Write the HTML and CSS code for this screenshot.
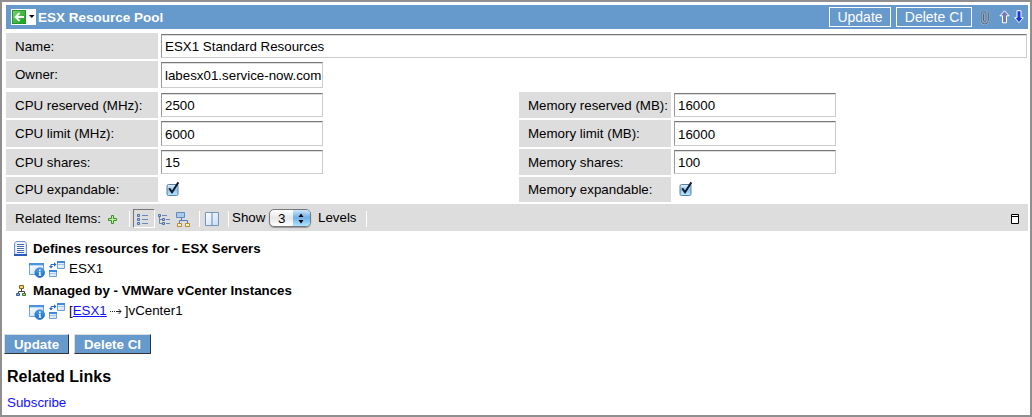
FILE: index.html
```html
<!DOCTYPE html>
<html lang="en">
<head>
<meta charset="utf-8">
<title>ESX Resource Pool</title>
<link rel="stylesheet" href="styles.css">
</head>
<body>
<svg class="defs" width="0" height="0" aria-hidden="true">
  <defs>
    <linearGradient id="green" x1="0" y1="0" x2="1" y2="1"><stop offset="0" stop-color="#7bd36a"/><stop offset="1" stop-color="#109c20"/></linearGradient>
    <linearGradient id="aqua" x1="0" y1="0" x2="0" y2="1"><stop offset="0" stop-color="#e4f2fc"/><stop offset=".5" stop-color="#8fc3ee"/><stop offset="1" stop-color="#b9edff"/></linearGradient>
    <linearGradient id="pane" x1="0" y1="0" x2="1" y2="1"><stop offset="0" stop-color="#fff"/><stop offset="1" stop-color="#c4dcf6"/></linearGradient>
    <linearGradient id="info" x1="0" y1="0" x2="0" y2="1"><stop offset="0" stop-color="#55a5ea"/><stop offset="1" stop-color="#1264c4"/></linearGradient>
    <symbol id="check" viewBox="0 0 14 15">
      <rect x="1" y="3.500" width="11" height="11" rx="1.5" fill="url(#aqua)" stroke="#5d7f9e"/>
      <path d="M3.2 7.2 6 11.3 12.4 1.4" fill="none" stroke="#101c30" stroke-width="2"/>
    </symbol>
    <symbol id="record" viewBox="0 0 16 16">
      <path d="M.5 1.5h14v11H.5z" fill="url(#pane)" stroke="#6aa5e3"/><path d="M0 1h15v3H0z" fill="#4b93df"/><path d="M1 3.5h13" stroke="#b9daf8"/>
      <circle cx="10.7" cy="10.7" r="4.8" fill="url(#info)" stroke="#2872c0" stroke-width=".8"/>
      <path d="M10 7.4h1.6v1.5H10zM9.7 9.7h1.9v3h.7v1H9.6v-1h.6v-2h-.5z" fill="#fff"/>
    </symbol>
    <symbol id="relation" viewBox="0 0 17 17">
      <path d="M8.5.5h7v7h-7zM.5 9.5h7v6h-7z" fill="url(#pane)" stroke="#6d9fd9"/>
      <path d="M8 0h8v2H8zM0 9h8v2H0z" fill="#4388d7"/><path d="M9 3.5h6M1 12.5h6" stroke="#a5c7ef"/>
      <path d="M2 6V3.500H6" fill="none" stroke="#2463d0"/><path d="M5 1.300 7.500 3.500 5 5.700zM0 5h4L2 7.500z" fill="#2463d0"/>
    </symbol>
  </defs>
</svg>
<main class="window">
  <header class="titlebar">
    <div class="back">
      <svg width="24" height="16" viewBox="0 0 24 16"><rect x=".5" y=".5" width="13" height="13" fill="url(#green)" stroke="#259a2b"/><path d="M12 7H4M7.5 3l-4 4 4 4" fill="none" stroke="#fff" stroke-width="1.800"/><path d="M17 5h5.500L19.750 8z"/></svg>
    </div>
    <h1 class="title">ESX Resource Pool</h1>
    <button class="top-button top-update">Update</button>
    <button class="top-button top-delete">Delete CI</button>
    <svg class="clip" width="10" height="15" viewBox="0 0 10 15"><path d="M3.500 4v6q0 1.500 1.300 1.500T6 10V3Q6 .9 3.600.9T1.200 3v7.500q0 3.400 3.600 3.400t3.600-3.400V2.500" fill="none" stroke="#a9bccd" stroke-width="1.800"/><path d="M3.500 4v6q0 1.500 1.300 1.500T6 10V3Q6 .9 3.600.9T1.200 3v7.500q0 3.400 3.600 3.400t3.600-3.400V2.500" fill="none" stroke="#4d5f72" stroke-width=".9"/></svg>
    <svg class="arrow-up" width="11" height="14" viewBox="0 0 11 14"><path d="m5.5.8 4.600 5H7.5v7h-4v-7H.9z" fill="#7777b8" stroke="#fff"/></svg>
    <svg class="arrow-down" width="10" height="14" viewBox="0 0 10 14"><path d="m5 12.700 4.300-5H7v-7H3v7H.7z" fill="#1838e0" stroke="#fff"/></svg>
  </header>

  <form class="form">
    <label class="label">Name:</label><div class="field field-wide">ESX1 Standard Resources</div>
    <label class="label">Owner:</label><div class="field owner">labesx01.service-now.com</div>
  </form>
  <div class="columns">
    <div class="form specs">
      <label class="label">CPU reserved (MHz):</label><div class="field">2500</div>
      <label class="label">CPU limit (MHz):</label><div class="field tall">6000</div>
      <label class="label">CPU shares:</label><div class="field">15</div>
      <label class="label">CPU expandable:</label><svg class="check" width="14" height="15"><use href="#check"/></svg>
    </div>
    <div class="form specs">
      <label class="label">Memory reserved (MB):</label><div class="field">16000</div>
      <label class="label">Memory limit (MB):</label><div class="field tall">16000</div>
      <label class="label">Memory shares:</label><div class="field">100</div>
      <label class="label">Memory expandable:</label><svg class="check" width="14" height="15"><use href="#check"/></svg>
    </div>
  </div>

  <section class="toolbar">
    <span class="related">Related Items:</span>
    <svg class="plus" width="10" height="10" viewBox="0 0 10 10"><path d="M3.5.5h2v3h3v2h-3v3h-2v-3h-3v-2h3z" fill="#c2edaa" stroke="#3b9226"/></svg>
    <i class="separator first"></i>
    <span class="view-active"><svg width="12" height="12" viewBox="0 0 12 12"><path d="M.5.500h2v2h-2zM.5 4.500h2v2h-2zM.5 8.500h2v2h-2z" fill="#b9cde8" stroke="#4a70ab"/><path d="M5 1.500h6M5 5.500h6M5 9.500h6" stroke="#6888b8"/></svg></span>
    <svg class="tree" width="12" height="12" viewBox="0 0 12 12"><path d="M1.500 2v7.500H4M2 5.500h2" fill="none" stroke="#7289ad"/><path d="M.5.500h2v2h-2zM4.500 4.500h2v2h-2zM4.500 8.500h2v2h-2z" fill="#b9cde8" stroke="#4a70ab"/><path d="M4 1.500h5M8 5.500h4M8 9.500h4" stroke="#6888b8"/></svg>
    <svg class="map" width="15" height="16" viewBox="0 0 15 16"><path d="M5.500 6v3M3.500 11V8.500h8V11" fill="none" stroke="#567cb4"/><path d="M.5.500h8v5h-8z" fill="#a9caf0" stroke="#648bc0"/><path d="M1.500 11.500h4v3h-4zM9.500 11.500h4v3h-4z" fill="#fff0c6" stroke="#b88b38"/></svg>
    <i class="separator second"></i>
    <svg class="split" width="14" height="14" viewBox="0 0 14 14"><path d="M.5.500h13v13H.5z" fill="url(#pane)" stroke="#7895bd"/><path d="M7 1v12" stroke="#6486b5"/></svg>
    <i class="separator third"></i>
    <span class="show">Show</span>
    <span class="select"><span class="select-value">3</span><span class="stepper"><svg width="8" height="11" viewBox="0 0 8 11"><path d="M1.500 4 4 .5 6.500 4zM1.500 7 4 10.500 6.500 7z"/></svg></span></span>
    <span class="levels">Levels</span>
    <i class="separator fourth"></i>
    <svg class="maximize" width="8" height="10" viewBox="0 0 8 10"><path d="M.5.500h7v9h-7z" fill="#fff" stroke="#000"/><path d="M1 2.500h6" stroke="#000"/></svg>
  </section>

  <section class="relations">
    <h2 class="group"><svg class="group-icon" width="13" height="16" viewBox="0 0 13 16"><path d="M2 .5h9l1.500 2v11H.5v-11z" fill="#d9e6fb" stroke="#7590d1"/><path d="M2.500 1.500h8v11h-8z" fill="#fff"/><path d="M3 3.500h7M3 5.500h7M3 7.500h7M3 9.500h7M3 11.500h7" stroke="#4364ba"/><path d="M0 13h13v2H0z" fill="#285bbd"/></svg>Defines resources for - ESX Servers</h2>
    <div class="item"><svg class="record" width="16" height="16"><use href="#record"/></svg><svg class="relation" width="17" height="17"><use href="#relation"/></svg><span>ESX1</span></div>
    <h2 class="group"><svg class="group-icon" width="13" height="12" viewBox="0 0 13 12"><path d="M7.500 4v3M4.500 8V6.500h6V8" fill="none" stroke="#444"/><path d="M5.500.500h4v3h-4z" fill="#f8d36b" stroke="#806618"/><path d="M2.500 8.500h3v2h-3z" fill="#91b9ec" stroke="#315c99"/><path d="M8.500 8.500h3v2h-3z" fill="#b4e393" stroke="#397829"/></svg>Managed by - VMWare vCenter Instances</h2>
    <div class="item"><svg class="record" width="16" height="16"><use href="#record"/></svg><svg class="relation" width="17" height="17"><use href="#relation"/></svg><span>[<a class="item-link" href="#">ESX1</a></span><svg class="dotted" width="12" height="7" viewBox="0 0 12 7"><path d="M0 3.500h6" stroke="#222" stroke-dasharray="1 1"/><path d="M6 3.500h5M8.500 1 11 3.500 8.500 6" fill="none" stroke="#222"/></svg><span>]vCenter1</span></div>
  </section>
  <div class="actions"><button class="action update">Update</button><button class="action delete">Delete CI</button></div>
  <h2 class="links-title">Related Links</h2>
  <a class="subscribe" href="#">Subscribe</a>
</main>
</body>
</html>
```
FILE: styles.css
```css
* { box-sizing: border-box; }
body { margin: 0; font: 13.33px/16px "Liberation Sans", Arial, sans-serif; color: #000; }
.defs { display: block; height: 0; }
svg { display: block; flex: none; }
h1, h2 { margin: 0; }
button { font: inherit; padding: 0; white-space: nowrap; }
.window { height: 417px; border: 2px solid #8f8f8f; padding: 3px 2px 0 4px; background: #fff; overflow: hidden; }
.titlebar { height: 24px; display: flex; align-items: center; padding-left: 5px; background: #6699cc; color: #fff; }
.back { width: 25px; height: 16px; background: #fff; padding: 1px 0 0 1px; overflow: hidden; }
.title { font-size: 13.5px; line-height: 16px; padding-top: 1px; margin-left: 2px; }
.top-button { height: 20px; background: #6699cc; color: #fff; border: 1px solid #fff; font-size: 14px; }
.top-update { width: 62px; margin-left: auto; }
.top-delete { width: 76px; margin-left: 5px; }
.clip { margin-left: 8px; }
.arrow-up { margin-left: 9px; }
.arrow-down { margin: 0 4px 0 4px; }
.form { display: grid; grid-template-columns: 152px 162px; grid-template-rows: 26px 27px; column-gap: 3px; row-gap: 2px; margin-top: 4px; }
.label { background: #ddd; padding: 1px 0 0 9px; display: flex; align-items: center; white-space: nowrap; }
.field { height: 24px; margin-top: 1px; border: 1px solid #ccc; border-top: 1px solid #777; border-left-color: #999; box-shadow: inset 0 1px #ddd; padding: 4px 3px 0; white-space: nowrap; overflow: hidden; }
.field-wide { width: 866px; }
.owner { height: 26px; padding-top: 5px; }
.columns { display: flex; gap: 196px; margin-top: 4px; }
.specs { margin-top: 0; grid-template-rows: 26px 27px 26px 25px; }
.tall { height: 25px; padding-top: 5px; }
.check { margin: 4px 0 0 5px; }
.toolbar { display: flex; align-items: flex-start; height: 27px; margin-top: 2px; padding-left: 9px; background: #ddd; }
.related { width: 88px; margin-top: 7px; }
.plus { margin: 11px 0 0 5px; }
.separator { width: 1px; height: 16px; margin-top: 7px; background: #fff; flex: none; }
.first { margin-left: 11px; }
.view-active { width: 22px; height: 19px; margin: 5px 0 0 3px; padding: 4px 0 0 3px; border: 1px solid #fff; border-top-color: #777; border-left-color: #777; }
.tree { margin: 10px 0 0 3px; }
.map { margin: 8px 0 0 6px; }
.second { margin-left: 8px; }
.split { margin: 8px 0 0 5px; }
.third { margin-left: 9px; }
.show { width: 35px; margin: 6px 0 0 3px; }
.select { display: flex; width: 42px; height: 18px; margin: 5px 0 0 2px; border: 1px solid #777; border-radius: 5px; overflow: hidden; background: linear-gradient(#fff, #e7e7e7 50%, #fff); box-shadow: 0 1px 1px #999; }
.select-value { width: 24px; padding: 1px 0 0 8px; }
.stepper { width: 18px; height: 16px; padding: 3px 0 0 4px; background: linear-gradient(#cce6ff, #6faee9 48%, #aee4ff); }
.levels { width: 40px; margin: 6px 0 0 7px; }
.fourth { margin-left: 8px; }
.maximize { margin: 10px 9px 0 auto; }
.relations { padding: 8px 0 0 8px; }
.group { display: flex; align-items: center; height: 18px; padding-top: 1px; font-size: 13.3px; line-height: 17px; }
.group-icon { margin-right: 6px; }
.item { display: flex; height: 24px; padding: 4px 0 0 15px; }
.record { margin-top: 1px; }
.relation { margin: 0 3px 0 4px; }
.item-link { color: #11f; text-decoration: underline; }
.dotted { margin: 5px 3px 0; }
.actions { display: flex; gap: 5px; margin: 11px 0 0 -2px; }
.action { height: 20px; padding-top: 1px; border: 1px solid; border-color: #ddd #333 #333 #ddd; background: #6699cc; color: #fff; font-weight: bold; }
.update { width: 65px; }
.delete { width: 77px; }
.links-title { font-size: 16px; line-height: 20px; margin: 13px 0 0 1px; }
.subscribe { display: block; margin: 8px 0 0 1px; color: #11f; text-decoration: none; }
```
